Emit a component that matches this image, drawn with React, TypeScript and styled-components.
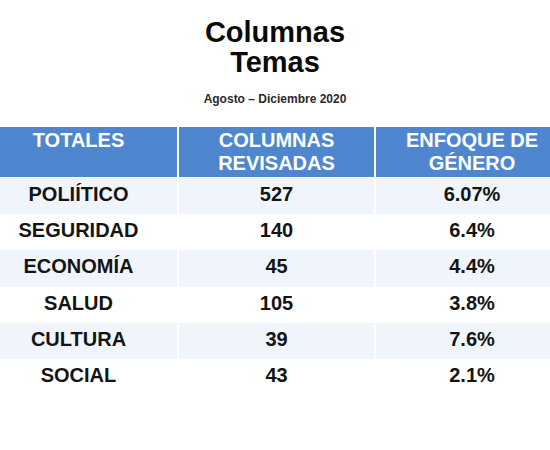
import React from 'react';
import styled, { createGlobalStyle } from 'styled-components';

const GlobalStyle = createGlobalStyle`
  html, body {
    margin: 0;
    padding: 0;
    background: #ffffff;
    overflow: hidden;
  }
  body {
    font-family: 'Liberation Sans', Arial, sans-serif;
  }
`;

const StyledSlide = styled.div`
  width: 550px;
  height: 450px;
  overflow: hidden;
  padding-top: 17px;
  box-sizing: border-box;
`;

const Title = styled.h1`
  margin: 0;
  font-size: 29px;
  line-height: 30px;
  font-weight: 700;
  color: #0a0a0a;
  text-align: center;
`;

const Subtitle = styled.p`
  margin: 15px 0 21px;
  font-size: 12px;
  line-height: 14px;
  font-weight: 700;
  color: #2a2a2a;
  text-align: center;
`;

const StyledTable = styled.div`
  margin-left: -20px;
  width: 588px;
`;

const Row = styled.div<{ $striped?: boolean; $head?: boolean }>`
  display: grid;
  grid-template-columns: 197px 195px 192px;
  column-gap: 2px;
  margin-bottom: ${({ $head }) => ($head ? '1px' : '0')};

  & > div {
    height: ${({ $head }) => ($head ? '50px' : '36.2px')};
    padding-top: ${({ $head }) => ($head ? '2px' : '5px')};
    box-sizing: border-box;
    background: ${({ $head, $striped }) =>
      $head ? '#4f86d0' : $striped ? '#f0f4fb' : '#ffffff'};
    color: ${({ $head }) => ($head ? '#ffffff' : '#141414')};
  }
`;

const Cell = styled.div`
  font-size: 20px;
  line-height: 23px;
  font-weight: 700;
  text-align: center;
`;

const rows = [
  ['POLIÍTICO', '527', '6.07%'],
  ['SEGURIDAD', '140', '6.4%'],
  ['ECONOMÍA', '45', '4.4%'],
  ['SALUD', '105', '3.8%'],
  ['CULTURA', '39', '7.6%'],
  ['SOCIAL', '43', '2.1%'],
];

const App = () => {
  return (
    <StyledSlide>
      <GlobalStyle />
      <Title>
        Columnas
        <br />
        Temas
      </Title>
      <Subtitle>Agosto – Diciembre 2020</Subtitle>

      <StyledTable>
        <Row $head>
          <Cell>TOTALES</Cell>
          <Cell>
            COLUMNAS
            <br />
            REVISADAS
          </Cell>
          <Cell>
            ENFOQUE DE
            <br />
            GÉNERO
          </Cell>
        </Row>
        {rows.map((r, i) => (
          <Row key={i} $striped={i % 2 === 0}>
            {r.map((c, j) => (
              <Cell key={j}>{c}</Cell>
            ))}
          </Row>
        ))}
      </StyledTable>
    </StyledSlide>
  );
};

export default App;
